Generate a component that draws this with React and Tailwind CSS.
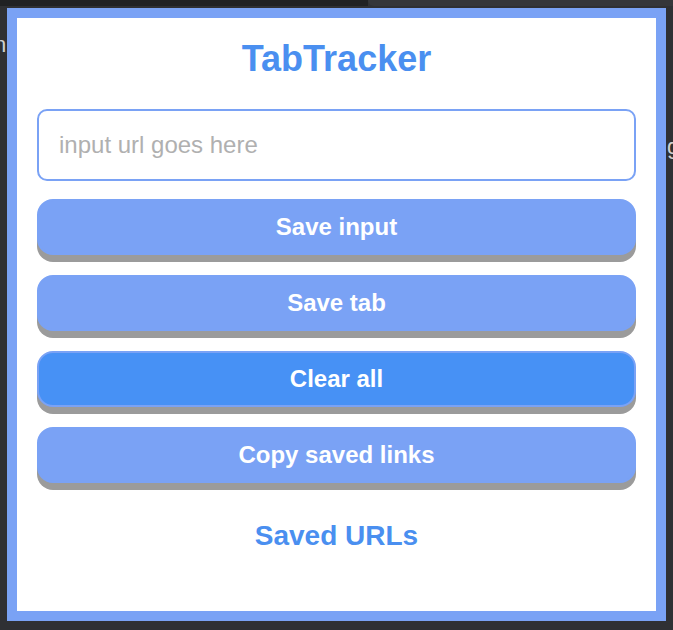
import { useState } from "react";

const buttons = [
  { label: "Save input", active: false },
  { label: "Save tab", active: false },
  { label: "Clear all", active: true },
  { label: "Copy saved links", active: false },
];

export default function App() {
  const [url, setUrl] = useState("");

  return (
    <div
      className="relative w-[673px] h-[630px] overflow-hidden bg-[#2f3034]"
      style={{ fontFamily: '"Liberation Sans", Arial, sans-serif' }}
    >
      {/* browser chrome peeking behind the popup */}
      <div className="flex h-[6px]">
        <div className="w-[368px] bg-[#202124]" />
        <div className="flex-1 bg-[#35363a] rounded-bl-[10px]" />
      </div>
      <span className="absolute left-[-6px] top-[28px] text-[22px] text-[#d0d0d0]">n</span>
      <span className="absolute left-[667px] top-[130px] text-[22px] text-[#d0d0d0]">g</span>

      <div className="relative ml-[7px] mt-[2px] w-[659px] h-[613px] border-[10px] border-[#7aa2f5] bg-white px-[20px] pt-[20px]">
        <h1 className="text-center text-[36px] leading-[42px] font-bold text-[#4a8ff0]">TabTracker</h1>

        <input
          value={url}
          onChange={(e) => setUrl(e.target.value)}
          placeholder="input url goes here"
          className="mt-[29px] block w-full h-[72px] rounded-[10px] border-2 border-[#7aa2f5] px-[20px] text-[24px] text-gray-800 outline-none placeholder:text-[#b0b0b0]"
        />

        <div className="mt-[18px] flex flex-col gap-[20px]">
          {buttons.map((b) => (
            <button
              key={b.label}
              className={`h-[56px] w-full rounded-[16px] border-2 border-[#7aa2f5] text-[24px] font-bold text-white shadow-[0_7px_0_#9b9b9b] ${
                b.active ? "bg-[#4791f5]" : "bg-[#7aa2f5]"
              }`}
            >
              {b.label}
            </button>
          ))}
        </div>

        <h2 className="mt-[37px] text-center text-[28px] leading-[32px] font-bold text-[#4a8ff0]">Saved URLs</h2>
      </div>
    </div>
  );
}
